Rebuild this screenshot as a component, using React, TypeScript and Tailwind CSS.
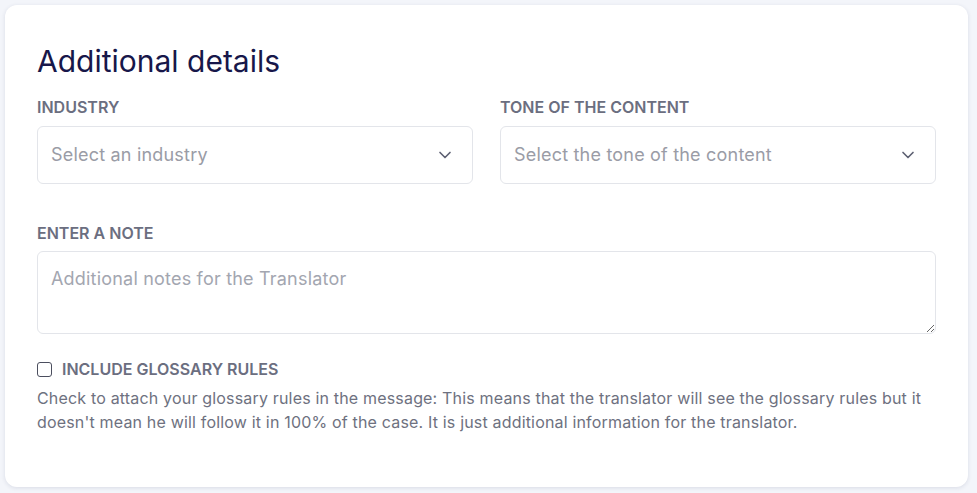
import { ChevronDown } from 'lucide-react'

const FONT = { fontFamily: 'Inter, "Noto Sans", sans-serif' }

function Label({ children }: { children: string }) {
  return <div className="text-base font-semibold uppercase leading-5 text-[#6b6e80]">{children}</div>
}

function SelectBox({ placeholder }: { placeholder: string }) {
  return (
    <div className="flex h-[58px] items-center justify-between rounded-md border border-[#e3e5ea] bg-white pl-[13px] pr-[17px]">
      <span className="text-lg tracking-[0.011em] text-[#9a9ca6]">{placeholder}</span>
      <ChevronDown size={20} strokeWidth={2} className="text-[#5d6072]" />
    </div>
  )
}

export default function App() {
  return (
    <div className="min-h-[493px] w-full bg-[#f3f5fa] p-[5px] pr-[9px] pb-[6px]" style={FONT}>
      <div className="rounded-xl bg-white px-8 pt-[38px] pb-[53px] shadow-[0_1px_4px_rgba(30,40,80,0.12)]">
        <h2 className="text-3xl font-normal leading-9 text-[#17174a]">Additional details</h2>

        <div className="mt-[18px] grid grid-cols-2 gap-[27px]">
          <div className="flex flex-col gap-[9px]">
            <Label>Industry</Label>
            <SelectBox placeholder="Select an industry" />
          </div>
          <div className="flex flex-col gap-[9px]">
            <Label>Tone of the content</Label>
            <SelectBox placeholder="Select the tone of the content" />
          </div>
        </div>

        <div className="mt-[39px] flex flex-col gap-[8px]">
          <Label>Enter a note</Label>
          <textarea
            placeholder="Additional notes for the Translator"
            className="block h-[83px] w-full rounded-md border border-[#e3e5ea] px-[13px] py-[15px] text-lg leading-6 tracking-[0.011em] text-[#374151] outline-none placeholder:text-[#a3a6b0]"
          />
        </div>

        <label className="mt-[23px] flex items-center gap-[10px]">
          <span className="h-[15px] w-[15px] rounded-[3px] border-[1.5px] border-[#4b4e5e] bg-white" />
          <span className="text-base font-semibold uppercase text-[#6b6e80]">Include glossary rules</span>
        </label>
        <p className="mt-[5px] text-base leading-6 tracking-[0.011em] text-[#6e7180]">
          Check to attach your glossary rules in the message: This means that the translator will see the glossary rules but it
          doesn't mean he will follow it in 100% of the case. It is just additional information for the translator.
        </p>
      </div>
    </div>
  )
}
